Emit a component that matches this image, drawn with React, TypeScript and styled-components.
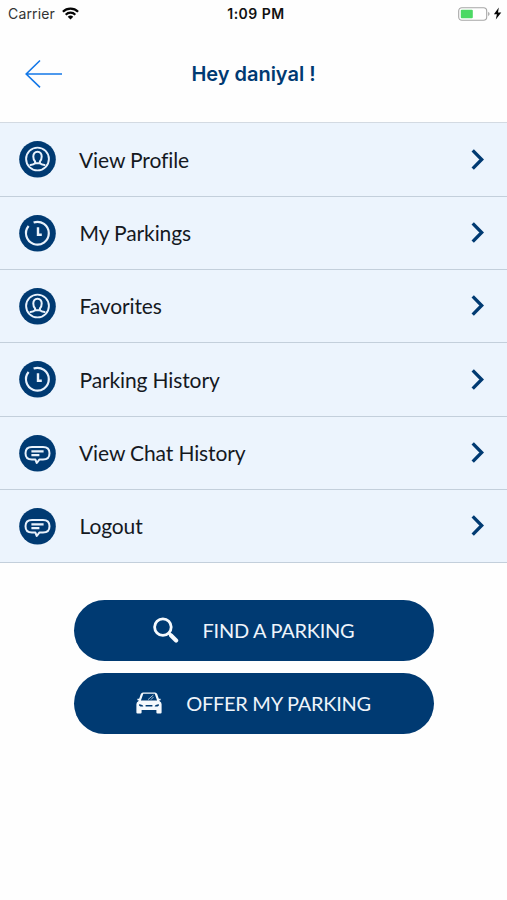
import React from 'react';
import styled, { createGlobalStyle } from 'styled-components';

const NAVY = '#003a72';

const GlobalStyle = createGlobalStyle`
  * { box-sizing: border-box; }
  body { margin: 0; background: #fefefe; }
  svg { display: block; flex: none; }
`;

const Screen = styled.main`
  width: 507px;
  height: 900px;
  overflow: hidden;
  background: #fefefe;
  font-family: Lato, sans-serif;
`;

const StatusBar = styled.div`
  display: grid;
  grid-template-columns: 1fr auto 1fr;
  align-items: center;
  height: 27px;
  padding: 0 5px 0 8px;
  font-family: Inter, sans-serif;
  font-size: 14px;
  color: #111;
`;

const StatusGroup = styled.div<{ $end?: boolean }>`
  display: flex;
  align-items: center;
  gap: ${(p) => (p.$end ? 3 : 7)}px;
  justify-content: ${(p) => (p.$end ? 'flex-end' : 'flex-start')};
`;

const Carrier = styled.span`
  width: 47px;
  white-space: nowrap;
  color: #333;
  letter-spacing: 0.15px;
`;

const Clock = styled.span`
  padding-left: 2px;
  font-weight: 600;
  letter-spacing: 0.5px;
`;

const Header = styled.header`
  display: grid;
  grid-template-columns: 64px 1fr 64px;
  align-items: center;
  height: 95px;
`;

const BackButton = styled.button`
  padding: 0 0 2px 24px;
  border: 0;
  background: none;
`;

const Title = styled.h1`
  margin: 0;
  padding-bottom: 1px;
  text-align: center;
  font: 600 20px/26px Inter, sans-serif;
  letter-spacing: -0.02px;
  color: ${NAVY};
`;

const Menu = styled.nav`
  display: grid;
  grid-template-rows: 74px 73px 73px 74px 73px 73px;
  border-top: 1px solid #d3dae2;
  background: #ecf4fd;
`;

const MenuRow = styled.a`
  display: flex;
  align-items: center;
  padding: 0 23px 0 19px;
  border-bottom: 1px solid #c3cfdb;
`;

const MenuLabel = styled.span<{ $x: number }>`
  flex: 1;
  padding-left: ${(p) => p.$x}px;
  font-size: 21px;
  line-height: 28px;
  letter-spacing: -0.12px;
  color: #15191f;
`;

const Actions = styled.div`
  display: flex;
  flex-direction: column;
  align-items: center;
  gap: 12px;
  padding-top: 36.5px;
`;

const ActionButton = styled.button`
  display: flex;
  align-items: center;
  justify-content: center;
  gap: 24px;
  width: 360px;
  height: 61px;
  padding: 0;
  border: 0;
  border-radius: 31px;
  background: ${NAVY};
  color: #eef4fa;
  font: 400 20px/26px Lato, sans-serif;
`;

const ActionLabel = styled.span`
  letter-spacing: -0.27px;
`;

type Kind = 'profile' | 'clock' | 'chat';

const Badge = ({ kind }: { kind: Kind }) => (
  <svg width="37" height="37" viewBox="0 0 37 37" fill="none" stroke="#e9f2fc" strokeWidth="2" strokeLinecap="round" strokeLinejoin="round">
    <circle cx="18.5" cy="18.3" r="18.3" fill={NAVY} stroke="none" />
    {kind === 'profile' && (
      <>
        <circle cx="18.5" cy="18" r="11.400" strokeWidth="1.900" />
        <path d="M18.500 10.800c-2.800 0-4.200 1.900-4.200 4.700 0 2.400.7 3.900 1.800 5v1.700h4.800v-1.700c1.100-1.100 1.800-2.600 1.800-5 0-2.800-1.400-4.700-4.200-4.700Z" />
        <path d="M15.900 22.400q-1.200 1.200-4.400 1.600M21.100 22.400q1.200 1.200 4.400 1.600" />
      </>
    )}
    {kind === 'clock' && (
      <>
        <path d="M14.600 7.500A11.400 11.400 0 1 1 9.600 11" strokeWidth="2.200" strokeLinecap="butt" />
        <path d="M19 12.300v7.400h3.800" strokeWidth="2.400" strokeLinecap="butt" strokeLinejoin="miter" />
      </>
    )}
    {kind === 'chat' && (
      <>
        <path d="M13 12h11c4 0 6.500 2.400 6.500 6.300s-2.500 6.300-6.500 6.300h-3.700l-2.500 3.400-1.400-3.400H13c-4 0-6.500-2.400-6.500-6.300S9 12 13 12Z" />
        <path d="M12.400 16.400h12.200M12.400 20.100h8" strokeWidth="2.200" strokeLinecap="butt" />
      </>
    )}
  </svg>
);

const Chevron = () => (
  <svg width="14" height="24" viewBox="0 0 14 24" fill="none">
    <path d="M2.700 2.300 11.700 11.500l-9 9.200" stroke={NAVY} strokeWidth="3.300" />
  </svg>
);

const BackArrow = () => (
  <svg width="40" height="30" viewBox="0 0 40 30" fill="none" stroke="#1478e8" strokeWidth="1.600">
    <path d="M16 1.500 2.200 15 16 28.300M2.200 15H38" />
  </svg>
);

const Wifi = () => (
  <svg width="17" height="13" viewBox="0 0 17 13" fill="none" stroke="#050505" strokeWidth="2.200">
    <path d="M.9 4.700a10.800 10.800 0 0 1 15.200 0M3.700 7.700a6.800 6.800 0 0 1 9.600 0" />
    <path d="m5.700 9.800 2.800 2.700 2.800-2.700a4 4 0 0 0-5.600 0Z" fill="#050505" stroke="none" />
  </svg>
);

const Battery = () => (
  <svg width="32" height="14" viewBox="0 0 32 14">
    <rect x=".7" y=".7" width="28" height="12.600" rx="3.200" fill="#fff" stroke="#a6a6a6" strokeWidth="1.100" />
    <rect x="2.800" y="2.700" width="12" height="8.600" rx="1" fill="#4cd964" />
    <path d="M30.100 4.800q3 2.200 0 4.400Z" fill="#a6a6a6" />
  </svg>
);

const Bolt = () => (
  <svg width="9" height="13" viewBox="0 0 9 13">
    <path d="M5.800.6.900 7.300h3L2.800 12.500 8.300 5.600H5L5.800.6Z" fill="#050505" />
  </svg>
);

const Search = () => (
  <svg width="26" height="27" viewBox="0 0 26 27" fill="none" stroke="#f5f9fd">
    <circle cx="9.900" cy="10.100" r="8.300" strokeWidth="2.800" />
    <path d="m15.500 15.800 3 3" strokeWidth="3" />
    <path d="m18.100 18.500 5 5" strokeWidth="4.200" strokeLinecap="round" />
  </svg>
);

const Car = () => (
  <svg width="26" height="22" viewBox="0 0 26 22">
    <path fill="#f5f9fd" fillRule="evenodd" d="M7 .5h12q1.500 0 2.200 1.600l2.500 7.200q1.900 1 1.900 3v8.200q0 1.100-1.100 1.100h-3q-1.100 0-1.100-1.100v-2.400H5.600v2.400q0 1.100-1.100 1.100h-3q-1.100 0-1.100-1.100v-8.200q0-2 1.900-3l2.500-7.200Q5.500.5 7 .5Zm.3 1.300L4.900 8.400h16.200l-2.400-6.600H7.300ZM3 12.300q-.3 2 1.500 2.200h2.800Q7 12.600 3 12.300Zm20 0q.3 2-1.500 2.200h-2.800q.3-1.900 4.300-2.200ZM9.600 13v1.500h6.800V13H9.600Z" />
    <path d="m12 7.600 5.400-4.600M15 7.600l2.600-2.700" stroke="#f5f9fd" strokeWidth=".7" />
    <path d="M1.400 7.600h3M21.600 7.600h3" stroke="#f5f9fd" strokeWidth="1.500" />
  </svg>
);

const items: { label: string; icon: Kind; x: number }[] = [
  { label: 'View Profile', icon: 'profile', x: 23 },
  { label: 'My Parkings', icon: 'clock', x: 23.5 },
  { label: 'Favorites', icon: 'profile', x: 23.5 },
  { label: 'Parking History', icon: 'clock', x: 23.5 },
  { label: 'View Chat History', icon: 'chat', x: 23 },
  { label: 'Logout', icon: 'chat', x: 23.5 },
];

export default function App() {
  return (
    <>
      <GlobalStyle />
      <Screen>
        <StatusBar>
          <StatusGroup>
            <Carrier>Carrier</Carrier>
            <Wifi />
          </StatusGroup>
          <Clock>1:09 PM</Clock>
          <StatusGroup $end>
            <Battery />
            <Bolt />
          </StatusGroup>
        </StatusBar>
        <Header>
          <BackButton aria-label="Back"><BackArrow /></BackButton>
          <Title>Hey daniyal !</Title>
        </Header>
        <Menu>
          {items.map((item) => (
            <MenuRow key={item.label}>
              <Badge kind={item.icon} />
              <MenuLabel $x={item.x}>{item.label}</MenuLabel>
              <Chevron />
            </MenuRow>
          ))}
        </Menu>
        <Actions>
          <ActionButton><Search /><ActionLabel>FIND A PARKING</ActionLabel></ActionButton>
          <ActionButton><Car /><ActionLabel>OFFER MY PARKING</ActionLabel></ActionButton>
        </Actions>
      </Screen>
    </>
  );
}
